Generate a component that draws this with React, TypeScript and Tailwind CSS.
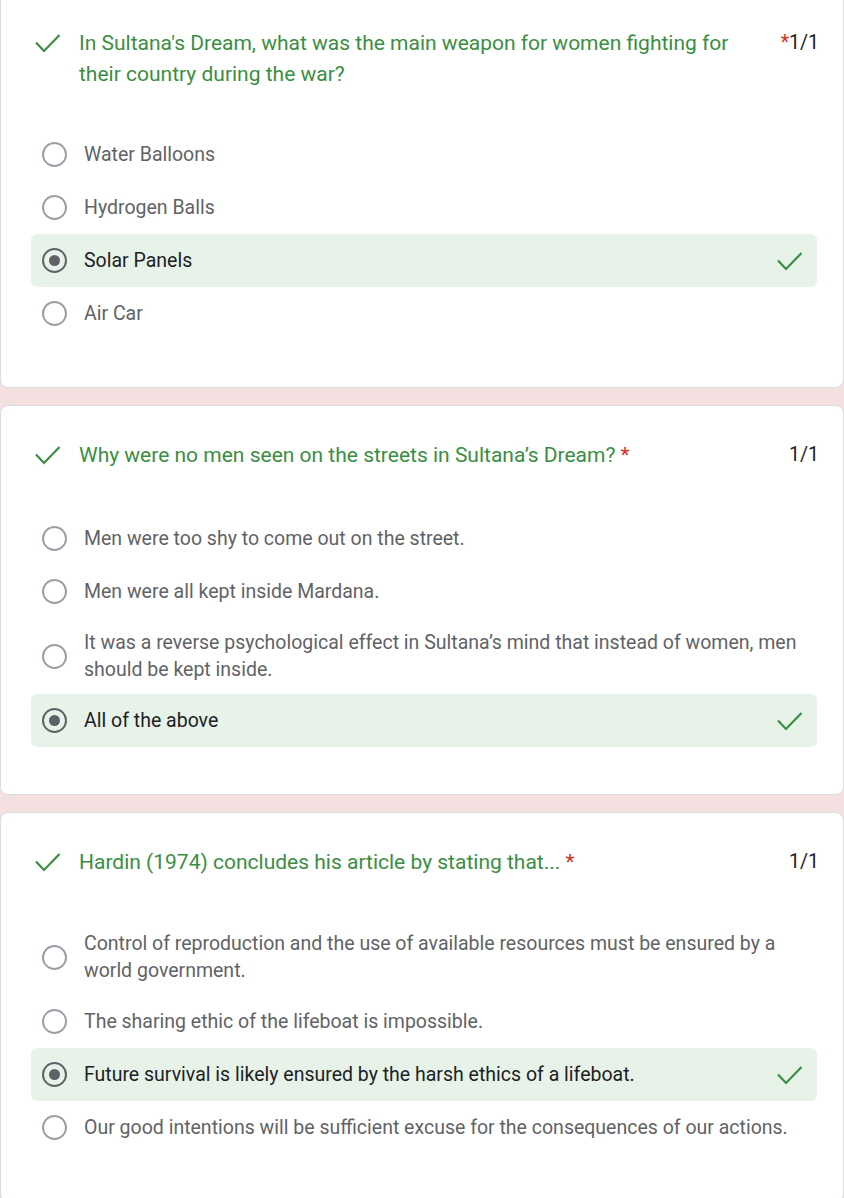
import React from "react";

type Option = {
	label: string;
	selected?: boolean;
	multi?: boolean;
};

type Question = {
	title: string;
	starBeforeScore?: boolean;
	options: Option[];
	optionsGap: string;
};

const questions: Question[] = [
	{
		title:
			"In Sultana's Dream, what was the main weapon for women fighting for their country during the war?",
		starBeforeScore: true,
		optionsGap: "mt-[38px]",
		options: [
			{ label: "Water Balloons" },
			{ label: "Hydrogen Balls" },
			{ label: "Solar Panels", selected: true },
			{ label: "Air Car" },
		],
	},
	{
		title: "Why were no men seen on the streets in Sultana\u2019s Dream?",
		optionsGap: "mt-[41px]",
		options: [
			{ label: "Men were too shy to come out on the street." },
			{ label: "Men were all kept inside Mardana." },
			{
				label:
					"It was a reverse psychological effect in Sultana\u2019s mind that instead of women, men should be kept inside.",
				multi: true,
			},
			{ label: "All of the above", selected: true },
		],
	},
	{
		title: "Hardin (1974) concludes his article by stating that...",
		optionsGap: "mt-[41px]",
		options: [
			{
				label:
					"Control of reproduction and the use of available resources must be ensured by a world government.",
				multi: true,
			},
			{ label: "The sharing ethic of the lifeboat is impossible." },
			{
				label: "Future survival is likely ensured by the harsh ethics of a lifeboat.",
				selected: true,
			},
			{
				label:
					"Our good intentions will be sufficient excuse for the consequences of our actions.",
			},
		],
	},
];

const Check = () => (
	<svg width="26" height="22" viewBox="0 0 26 22" className="shrink-0">
		<path
			d="M1 10.5 L9 19 L24.5 3"
			fill="none"
			stroke="#3a8e43"
			strokeWidth="2.2"
		/>
	</svg>
);

const Radio = ({ selected }: { selected?: boolean }) =>
	selected ? (
		<div className="w-[25px] h-[25px] shrink-0 rounded-full border-2 border-[#5f6368] flex items-center justify-center">
			<div className="w-[11px] h-[11px] rounded-full bg-[#5f6368]" />
		</div>
	) : (
		<div className="w-[25px] h-[25px] shrink-0 rounded-full border-2 border-[#9aa0a6]" />
	);

const QuestionCard = ({ q, first }: { q: Question; first?: boolean }) => (
	<div
		className={`bg-white border border-[#dadce0] rounded-lg pt-[33px] pb-[47px] pl-[30px] pr-[26px] ${
			first ? "-mt-[6px] rounded-t-none border-t-0" : ""
		}`}>
		<div className="flex items-start">
			<div className="pl-[4px] pt-[5px] w-[48px] shrink-0">
				<Check />
			</div>
			<div className="flex-1 text-[21px] leading-[31px] pt-[1px] text-[#3a8e43] pr-[30px]">
				{q.title}
				{!q.starBeforeScore && <span className="text-[#d93025]"> *</span>}
			</div>
			<div className="text-[19.5px] leading-[32px] text-[#202124] -mr-[2px] shrink-0">
				{q.starBeforeScore && <span className="text-[#d93025]">*</span>}
				1/1
			</div>
		</div>
		<div className={`${q.optionsGap} flex flex-col`}>
			{q.options.map((o) => (
				<div
					key={o.label}
					className={`flex items-center pl-[11px] pr-[14px] rounded-md ${
						o.multi ? "py-[11px]" : "py-[13px]"
					} ${o.selected ? "bg-[#e7f3e9]" : ""}`}>
					<Radio selected={o.selected} />
					<div
						className={`flex-1 pl-[17px] text-[19.5px] leading-[27px] ${
							o.selected ? "text-[#202124]" : "text-[#5f6368]"
						}`}>
						{o.label}
					</div>
					{o.selected && <Check />}
				</div>
			))}
		</div>
	</div>
);

export default function App() {
	return (
		<div
			className="min-h-[1198px] bg-[#f4dfe1] flex flex-col gap-[17px] overflow-hidden"
			style={{ fontFamily: "Roboto, 'Liberation Sans', sans-serif" }}>
			{questions.map((q, i) => (
				<QuestionCard key={i} q={q} first={i === 0} />
			))}
		</div>
	);
}
